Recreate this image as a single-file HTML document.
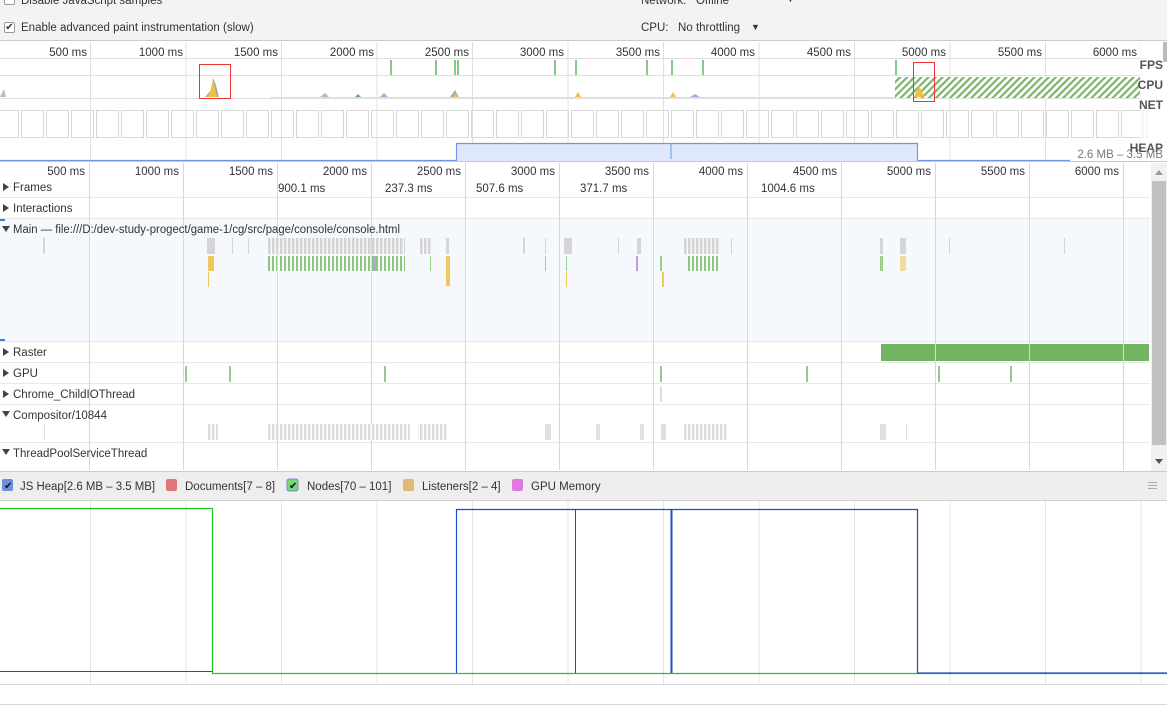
<!DOCTYPE html>
<html><head><meta charset="utf-8"><style>
*{margin:0;padding:0;box-sizing:border-box}
body{width:1167px;height:706px;overflow:hidden;background:#fff;font-family:"Liberation Sans",sans-serif;font-size:11.5px;color:#333;position:relative}
.abs{position:absolute}
</style></head><body>
<div class="abs" style="left:0;top:0;width:1167px;height:41px;background:#f3f3f3;border-bottom:1px solid #ccc"></div>
<div class="abs" style="left:4px;top:-6px;width:11px;height:11px;border:1px solid #999;border-radius:2px;background:#fff"></div>
<div class="abs" style="left:21px;top:-5px;color:#333">Disable JavaScript samples</div>
<div class="abs" style="left:4px;top:22px;width:11px;height:11px;border:1px solid #999;border-radius:2px;background:#fff;font-size:10px;line-height:9px;text-align:center">✔</div>
<div class="abs" style="left:21px;top:22px;color:#333">Enable advanced paint instrumentation (slow)</div>
<div class="abs" style="left:641px;top:-5px;color:#333">Network:&nbsp;&nbsp; Offline</div>
<div class="abs" style="left:786px;top:-6px;font-size:9px;color:#333">▼</div>
<div class="abs" style="left:641px;top:22px;color:#333">CPU:&nbsp;&nbsp; No throttling</div>
<div class="abs" style="left:751px;top:22px;font-size:9px;color:#333">▼</div>

<svg class="abs" style="left:0;top:0" width="1167" height="706" font-family="Liberation Sans, sans-serif">
<defs>
<pattern id="fb" width="25" height="30" patternUnits="userSpaceOnUse" x="-4" y="110">
<rect x="0.5" y="0.5" width="22" height="27" fill="#fff" stroke="#d8d8d8"/>
</pattern>
<pattern id="hat" width="5" height="5" patternUnits="userSpaceOnUse" patternTransform="rotate(45)">
<rect width="5" height="5" fill="#fff"/><rect width="2.2" height="5" fill="#7cb46c"/>
</pattern>
<pattern id="sg" width="4" height="10" patternUnits="userSpaceOnUse"><rect width="4" height="10" fill="#f5f8fd"/><rect width="2.5" height="10" fill="#d3d3d3"/></pattern>
<pattern id="sgr" width="4" height="10" patternUnits="userSpaceOnUse"><rect width="4" height="10" fill="#f5f8fd"/><rect width="2" height="10" fill="#8cc67c"/></pattern>
<pattern id="sc" width="4" height="10" patternUnits="userSpaceOnUse"><rect width="4" height="10" fill="#fff"/><rect width="2.5" height="10" fill="#dcdcdc"/></pattern>
</defs>
<g stroke="#e0e0e0">
<line x1="0" y1="58.5" x2="1150" y2="58.5"/><line x1="0" y1="75.5" x2="1140" y2="75.5"/><line x1="0" y1="98.5" x2="1140" y2="98.5"/>
</g>
<rect x="0" y="110" width="1150" height="28" fill="url(#fb)"/>
<g stroke="#e0e0e0">
<line x1="90.5" y1="42" x2="90.5" y2="161"/><line x1="186" y1="42" x2="186" y2="161"/><line x1="281.5" y1="42" x2="281.5" y2="161"/><line x1="377" y1="42" x2="377" y2="161"/><line x1="472.5" y1="42" x2="472.5" y2="161"/><line x1="568" y1="42" x2="568" y2="161"/><line x1="663.5" y1="42" x2="663.5" y2="161"/><line x1="759" y1="42" x2="759" y2="161"/><line x1="854.5" y1="42" x2="854.5" y2="161"/><line x1="950" y1="42" x2="950" y2="161"/><line x1="1045.5" y1="42" x2="1045.5" y2="161"/><line x1="1141" y1="42" x2="1141" y2="161"/>
</g>
<g font-size="11.5" fill="#333" text-anchor="end">
<text x="87" y="56">500 ms</text><text x="183" y="56">1000 ms</text><text x="278" y="56">1500 ms</text><text x="374" y="56">2000 ms</text><text x="469" y="56">2500 ms</text><text x="564" y="56">3000 ms</text><text x="660" y="56">3500 ms</text><text x="755" y="56">4000 ms</text><text x="851" y="56">4500 ms</text><text x="946" y="56">5000 ms</text><text x="1042" y="56">5500 ms</text><text x="1137" y="56">6000 ms</text>
</g>
<g stroke="#5cb85c" stroke-width="1.5">
<line x1="391" y1="60" x2="391" y2="75"/><line x1="436" y1="60" x2="436" y2="75"/><line x1="455" y1="60" x2="455" y2="75"/><line x1="458" y1="60" x2="458" y2="75"/><line x1="555" y1="60" x2="555" y2="75"/><line x1="576" y1="60" x2="576" y2="75"/><line x1="647" y1="60" x2="647" y2="75"/><line x1="672" y1="60" x2="672" y2="75"/><line x1="703" y1="60" x2="703" y2="75"/><line x1="896" y1="60" x2="896" y2="75"/>
</g>
<rect x="895" y="77" width="245" height="21" fill="url(#hat)"/>
<path d="M205 97 L211 90 L213 78 L216 85 L219 97Z" fill="#aaa"/>
<path d="M208 97 L211 88 L213 79 L215 90 L217 97Z" fill="#f0c040"/>
<path d="M914 97 L917 90 L919 85 L922 92 L925 97Z" fill="#f0c040"/>
<path d="M450 97 L455 90 L459 97Z" fill="#aaa"/><path d="M453 97 L456 93 L458 97Z" fill="#f0c040"/>
<path d="M0 97 L4 89 L6 97Z" fill="#bbb"/>
<path d="M320 97 L325 93 L329 97Z" fill="#bbb"/><path d="M355 97 L358 94 L361 97Z" fill="#6a6"/>
<path d="M575 97 L578 92 L581 97Z" fill="#f0c040"/><path d="M670 97 L673 92 L676 97Z" fill="#f0c040"/>
<path d="M690 97 L695 94 L700 97Z" fill="#b9a0e0"/><path d="M380 97 L384 93 L388 97Z" fill="#b9a0e0"/>
<line x1="270" y1="97.5" x2="895" y2="97.5" stroke="#ddd"/>
<rect x="199.5" y="64.5" width="31" height="34" fill="none" stroke="#e33"/>
<rect x="913.5" y="62.5" width="21" height="39" fill="none" stroke="#e33"/>
<rect x="456" y="143" width="461" height="18" fill="#dfe8fb"/>
<path d="M0 160.5 H456.5 V143.5 H917.5 V160.5 H1070" fill="none" stroke="#6d97e8" stroke-width="1.2"/>
<line x1="671" y1="143" x2="671" y2="159" stroke="#6d97e8"/>
<rect x="1140" y="42" width="27" height="120" fill="rgba(255,255,255,.7)"/>
<g font-size="12" font-weight="bold" fill="#555" text-anchor="end">
<text x="1163" y="69">FPS</text><text x="1163" y="89">CPU</text><text x="1163" y="109">NET</text><text x="1163" y="152">HEAP</text>
</g>
<text x="1163" y="158" font-size="11.5" fill="#777" text-anchor="end">2.6 MB – 3.5 MB</text>
<rect x="1163" y="42" width="4" height="20" fill="#bbb"/>
<line x1="0" y1="161.5" x2="1167" y2="161.5" stroke="#c8c8c8"/>

<rect x="0" y="218" width="1150" height="123" fill="#f5f8fd"/>
<g stroke="#e8e8e8">
<line x1="0" y1="197.5" x2="1150" y2="197.5"/><line x1="0" y1="218.5" x2="1150" y2="218.5"/><line x1="0" y1="341.5" x2="1150" y2="341.5"/><line x1="0" y1="362.5" x2="1150" y2="362.5"/><line x1="0" y1="383.5" x2="1150" y2="383.5"/><line x1="0" y1="404.5" x2="1150" y2="404.5"/><line x1="0" y1="442.5" x2="1150" y2="442.5"/>
</g>
<rect x="881" y="344" width="268" height="17" fill="#74b264"/>
<g fill="url(#sg)"><rect x="268" y="238" width="137" height="16"/><rect x="683" y="238" width="37" height="16"/><rect x="420" y="238" width="12" height="16"/></g>
<g fill="#d5d5d5">
<rect x="207" y="238" width="8" height="16"/><rect x="446" y="238" width="3" height="16"/><rect x="43" y="238" width="2" height="16"/><rect x="232" y="238" width="1" height="16"/><rect x="248" y="238" width="1" height="16"/><rect x="523" y="238" width="2" height="16"/><rect x="545" y="238" width="1" height="16"/><rect x="564" y="238" width="8" height="16"/><rect x="618" y="238" width="1" height="16"/><rect x="637" y="238" width="4" height="16"/><rect x="731" y="238" width="1" height="16"/><rect x="880" y="238" width="3" height="16"/><rect x="900" y="238" width="6" height="16"/><rect x="949" y="238" width="1" height="16"/><rect x="1064" y="238" width="1" height="16"/>
</g>
<g fill="url(#sgr)"><rect x="268" y="256" width="137" height="15"/><rect x="686" y="256" width="34" height="15"/></g>
<g fill="#9cd08c">
<rect x="430" y="256" width="1" height="15"/><rect x="545" y="256" width="1" height="15"/><rect x="566" y="256" width="1" height="15"/><rect x="660" y="256" width="2" height="15"/><rect x="880" y="256" width="3" height="15"/>
</g>
<g fill="#f0c860"><rect x="208" y="256" width="6" height="15"/><rect x="446" y="256" width="4" height="30"/><rect x="566" y="272" width="1" height="15"/><rect x="208" y="272" width="1" height="15"/><rect x="662" y="272" width="2" height="15"/><rect x="900" y="256" width="6" height="15" opacity=".6"/></g>
<rect x="636" y="256" width="2" height="15" fill="#b9a0e0"/><rect x="374" y="256" width="2" height="15" fill="#b9a0e0"/>
<g stroke="#d8d8d8">
<line x1="89.5" y1="163" x2="89.5" y2="470"/><line x1="183.5" y1="163" x2="183.5" y2="470"/><line x1="277.5" y1="163" x2="277.5" y2="470"/><line x1="371.5" y1="163" x2="371.5" y2="470"/><line x1="465.5" y1="163" x2="465.5" y2="470"/><line x1="559.5" y1="163" x2="559.5" y2="470"/><line x1="653.5" y1="163" x2="653.5" y2="470"/><line x1="747.5" y1="163" x2="747.5" y2="470"/><line x1="841.5" y1="163" x2="841.5" y2="470"/><line x1="935.5" y1="163" x2="935.5" y2="470"/><line x1="1029.5" y1="163" x2="1029.5" y2="470"/><line x1="1123.5" y1="163" x2="1123.5" y2="470"/>
</g>
<g font-size="11.5" fill="#333" text-anchor="end">
<text x="85" y="175">500 ms</text><text x="179" y="175">1000 ms</text><text x="273" y="175">1500 ms</text><text x="367" y="175">2000 ms</text><text x="461" y="175">2500 ms</text><text x="555" y="175">3000 ms</text><text x="649" y="175">3500 ms</text><text x="743" y="175">4000 ms</text><text x="837" y="175">4500 ms</text><text x="931" y="175">5000 ms</text><text x="1025" y="175">5500 ms</text><text x="1119" y="175">6000 ms</text>
</g>
<g font-size="11.5" fill="#333">
<text x="278" y="192">900.1 ms</text><text x="385" y="192">237.3 ms</text><text x="476" y="192">507.6 ms</text><text x="580" y="192">371.7 ms</text><text x="761" y="192">1004.6 ms</text>
<text x="13" y="191">Frames</text><text x="13" y="212">Interactions</text><text x="13" y="233" textLength="387" lengthAdjust="spacingAndGlyphs">Main — file:///D:/dev-study-progect/game-1/cg/src/page/console/console.html</text>
<text x="13" y="356">Raster</text><text x="13" y="377">GPU</text><text x="13" y="398">Chrome_ChildIOThread</text><text x="13" y="419">Compositor/10844</text><text x="13" y="457">ThreadPoolServiceThread</text>
</g>
<g fill="#444">
<path d="M3 183 L9 187 L3 191Z"/><path d="M3 204 L9 208 L3 212Z"/><path d="M2 226 L10 226 L6 232Z"/><path d="M3 348 L9 352 L3 356Z"/><path d="M3 369 L9 373 L3 377Z"/><path d="M3 390 L9 394 L3 398Z"/><path d="M2 411 L10 411 L6 417Z"/><path d="M2 449 L10 449 L6 455Z"/>
</g>
<rect x="0" y="219" width="5" height="2" fill="#3b7de0"/><rect x="0" y="339" width="5" height="2" fill="#3b7de0"/>
<g stroke="#5a9e4a" stroke-width="1.2"><line x1="186" y1="366" x2="186" y2="382"/><line x1="230" y1="366" x2="230" y2="382"/><line x1="385" y1="366" x2="385" y2="382"/><line x1="661" y1="366" x2="661" y2="382"/><line x1="807" y1="366" x2="807" y2="382"/><line x1="939" y1="366" x2="939" y2="382"/><line x1="1011" y1="366" x2="1011" y2="382"/></g>
<line x1="661" y1="387" x2="661" y2="402" stroke="#bbb"/>
<g fill="url(#sc)"><rect x="268" y="424" width="142" height="16"/><rect x="418" y="424" width="30" height="16"/><rect x="683" y="424" width="44" height="16"/><rect x="208" y="424" width="10" height="16"/></g>
<g fill="#e0e0e0"><rect x="596" y="424" width="4" height="16"/><rect x="640" y="424" width="4" height="16"/><rect x="661" y="424" width="5" height="16"/><rect x="880" y="424" width="6" height="16"/><rect x="906" y="424" width="1" height="16"/><rect x="44" y="424" width="1" height="16"/><rect x="545" y="424" width="6" height="16"/></g>
<rect x="1151" y="163" width="16" height="308" fill="#f1f1f1"/>
<rect x="1152" y="181" width="14" height="264" fill="#c1c1c1"/>
<path d="M1155 175 L1159 170 L1163 175Z" fill="#999"/><path d="M1155 459 L1159 464 L1163 459Z" fill="#555"/>

<rect x="0" y="471" width="1167" height="30" fill="#eeeeee"/>
<line x1="0" y1="471.5" x2="1167" y2="471.5" stroke="#ccc"/><line x1="0" y1="500.5" x2="1167" y2="500.5" stroke="#d0d0d0"/>
<rect x="2" y="479" width="11" height="12" rx="2" fill="#6b8fd8"/><text x="4" y="489" font-size="10" fill="#111">✔</text>
<rect x="166" y="479" width="11" height="12" rx="2" fill="#e07878"/>
<rect x="287" y="479" width="11" height="12" rx="2" fill="#78d878" stroke="#6b8fd8"/><text x="289" y="489" font-size="10" fill="#111">✔</text>
<rect x="403" y="479" width="11" height="12" rx="2" fill="#e0b878"/>
<rect x="512" y="479" width="11" height="12" rx="2" fill="#e078e0"/>
<g font-size="11.5" fill="#333"><text x="20" y="490" textLength="135" lengthAdjust="spacingAndGlyphs">JS Heap[2.6 MB – 3.5 MB]</text><text x="185" y="490">Documents[7 – 8]</text><text x="307" y="490">Nodes[70 – 101]</text><text x="422" y="490">Listeners[2 – 4]</text><text x="531" y="490">GPU Memory</text></g>
<g stroke="#aaa"><line x1="1148" y1="482.5" x2="1157" y2="482.5"/><line x1="1148" y1="485.5" x2="1157" y2="485.5"/><line x1="1148" y1="488.5" x2="1157" y2="488.5"/></g>

<g stroke="#e4e4e4">
<line x1="90.5" y1="501" x2="90.5" y2="684"/><line x1="186" y1="501" x2="186" y2="684"/><line x1="281.5" y1="501" x2="281.5" y2="684"/><line x1="377" y1="501" x2="377" y2="684"/><line x1="472.5" y1="501" x2="472.5" y2="684"/><line x1="568" y1="501" x2="568" y2="684"/><line x1="663.5" y1="501" x2="663.5" y2="684"/><line x1="759" y1="501" x2="759" y2="684"/><line x1="854.5" y1="501" x2="854.5" y2="684"/><line x1="950" y1="501" x2="950" y2="684"/><line x1="1045.5" y1="501" x2="1045.5" y2="684"/><line x1="1141" y1="501" x2="1141" y2="684"/>
</g>
<line x1="0" y1="684.5" x2="1167" y2="684.5" stroke="#d8d8d8"/>
<line x1="0" y1="704.5" x2="1167" y2="704.5" stroke="#d8d8d8"/>
<path d="M0 508.5 H212.5 V673.5 H1167" fill="none" stroke="#1ec81e" stroke-width="1.2"/>
<path d="M0 671.5 H212" fill="none" stroke="#1a4ec8" stroke-width="1"/>
<path d="M456.5 673 V509.5 H917.5 V673 H1167" fill="none" stroke="#1a4ec8" stroke-width="1.2"/>
<line x1="575.5" y1="509" x2="575.5" y2="673" stroke="#1a4ec8"/>
<line x1="671.5" y1="509" x2="671.5" y2="673" stroke="#1a4ec8" stroke-width="2"/>
</svg>
</body></html>
